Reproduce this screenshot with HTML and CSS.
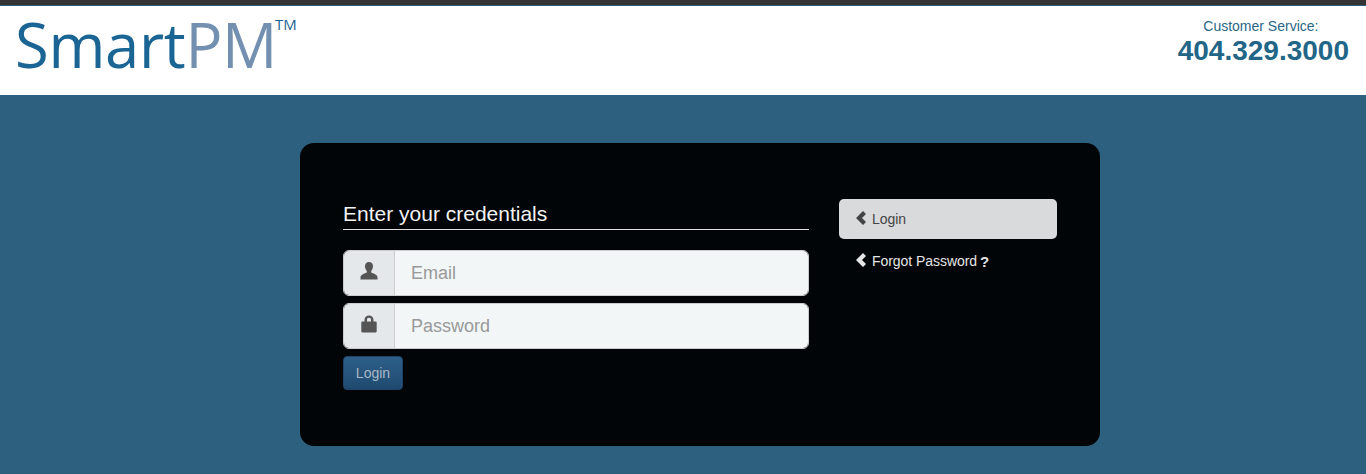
FILE: index.html
```html
<!DOCTYPE html>
<html lang="en">
<head>
    <meta charset="UTF-8">
    <title>SmartPM Login</title>
    <link rel="stylesheet" href="styles.css">
</head>
<body>
    <!-- Header -->
    <header class="header">
        <div class="logo">Smart<span class="logo-pm">PM</span><span class="logo-tm">TM</span></div>
        <div class="service">
            <div class="service-label">Customer Service:</div>
            <div class="service-phone">404.329.3000</div>
        </div>
    </header>

    <!-- Login Panel -->
    <main class="main">
        <div class="panel">
            <form class="login-form">
                <h2 class="form-title">Enter your credentials</h2>
                <div class="input-group">
                    <span class="input-addon">
                        <svg class="addon-icon" viewBox="0 0 18 18"><path d="M9 0c2.600 0 4 1.900 4 4.300 0 1.900-.8 3.500-1.800 4.500v1.700c1.500.8 5.800 2 6.300 4.500v2.500H.5V15c.5-2.500 4.800-3.700 6.300-4.500V8.800C5.800 7.800 5 6.200 5 4.300 5 1.900 6.400 0 9 0z"/></svg>
                    </span>
                    <input class="input-field" type="text" placeholder="Email">
                </div>
                <div class="input-group">
                    <span class="input-addon">
                        <svg class="addon-icon" viewBox="0 0 18 18"><path fill-rule="evenodd" d="M4.500 6.500V5C4.500 2 6.400.5 9 .5S13.500 2 13.500 5v1.500h2c.7 0 1.200.5 1.200 1.200v8.600c0 .7-.5 1.200-1.200 1.200h-13c-.7 0-1.200-.5-1.200-1.200V7.700c0-.7.5-1.200 1.200-1.200h2zm2.500 0h4V5c0-1.400-.7-2.200-2-2.200S7 3.600 7 5v1.500z"/></svg>
                    </span>
                    <input class="input-field" type="password" placeholder="Password">
                </div>
                <button class="login-btn" type="button">Login</button>
            </form>

            <nav class="side-nav">
                <a class="nav-item nav-item-active" href="#">
                    <svg class="chevron" viewBox="0 0 12 14"><path d="M8 0l3 3-4 4 4 4-3 3-7-7z"/></svg>
                    Login
                </a>
                <a class="nav-item" href="#">
                    <svg class="chevron" viewBox="0 0 12 14"><path d="M8 0l3 3-4 4 4 4-3 3-7-7z"/></svg>
                    Forgot Password <b class="nav-q">?</b>
                </a>
            </nav>
        </div>
    </main>
</body>
</html>
```

FILE: styles.css
```css
* {
    box-sizing: border-box;
}
html, body {
    height: 100%;
}
body {
    margin: 0;
    font-family: "Liberation Sans", Arial, sans-serif;
    background-color: #2d607f;
    display: flex;
    flex-direction: column;
    overflow: hidden;
}
.header {
    height: 95px;
    flex: none;
    background-color: #fff;
    border-top: 5px solid #333;
    display: flex;
    justify-content: space-between;
    padding: 0 17px 0 15px;
    box-shadow: inset 0 1px 0 #2d607f;
}
.logo {
    font-family: "Open Sans", sans-serif;
    font-size: 61.5px;
    line-height: 78px;
    color: #1b6595;
    letter-spacing: -0.3px;
}
.logo-pm {
    color: #7490b0;
}
.logo-tm {
    font-size: 15px;
    line-height: 15px;
    letter-spacing: 0;
    vertical-align: 38px;
    margin-left: -2px;
}
.service {
    text-align: center;
    padding-top: 13px;
}
.service-label {
    font-size: 14px;
    line-height: 16px;
    color: #2a6688;
    padding-right: 5px;
}
.service-phone {
    font-size: 28px;
    line-height: 33px;
    font-weight: bold;
    color: #216587;
}
.main {
    flex: 1;
    padding: 48px 0 0 300px;
    display: flex;
    align-items: flex-start;
}
.panel {
    width: 800px;
    height: 303px;
    background-color: #010507;
    border-radius: 14px;
    padding: 56px 43px 0;
    display: flex;
    gap: 30px;
}
.login-form {
    width: 466px;
}
.form-title {
    margin: 0 0 20px;
    height: 31px;
    font-size: 21px;
    font-weight: normal;
    line-height: 30px;
    color: #f2f2f2;
    border-bottom: 1px solid #e0e0e0;
}
.input-group {
    display: flex;
    height: 46px;
    margin-bottom: 7px;
    border: 1px solid #ccc;
    border-radius: 6px;
    overflow: hidden;
}
.input-addon {
    width: 51px;
    flex: none;
    background-color: #e4e8ea;
    border-right: 1px solid #ccc;
    display: flex;
    align-items: center;
    justify-content: center;
}
.addon-icon {
    width: 18px;
    height: 18px;
    fill: #555;
    margin-top: -4px;
}
.input-field {
    flex: 1;
    min-width: 0;
    border: none;
    outline: none;
    background-color: #f2f6f7;
    padding: 0 16px;
    font-family: inherit;
    font-size: 18px;
}
.input-field::placeholder {
    color: #999;
    opacity: 1;
}
.login-btn {
    display: block;
    width: 60px;
    height: 34px;
    padding: 0;
    border: 1px solid #1f4468;
    border-radius: 4px;
    background: linear-gradient(#2d5f88, #1f4a70);
    color: #a9b8c6;
    font-family: inherit;
    font-size: 14px;
}
.side-nav {
    width: 218px;
    display: flex;
    flex-direction: column;
    gap: 2px;
}
.nav-item {
    height: 40px;
    padding: 0 16px;
    border-radius: 5px;
    display: flex;
    align-items: center;
    gap: 5px;
    font-size: 14px;
    letter-spacing: -0.05px;
    color: #e6e6e6;
    text-decoration: none;
}
.nav-item-active {
    background-color: #d9dadc;
    color: #444;
}
.chevron {
    width: 12px;
    height: 14px;
    fill: currentColor;
    flex: none;
    margin-top: -2px;
}
.nav-q {
    font-size: 15px;
    font-weight: bold;
    margin-left: -2px;
}
```
